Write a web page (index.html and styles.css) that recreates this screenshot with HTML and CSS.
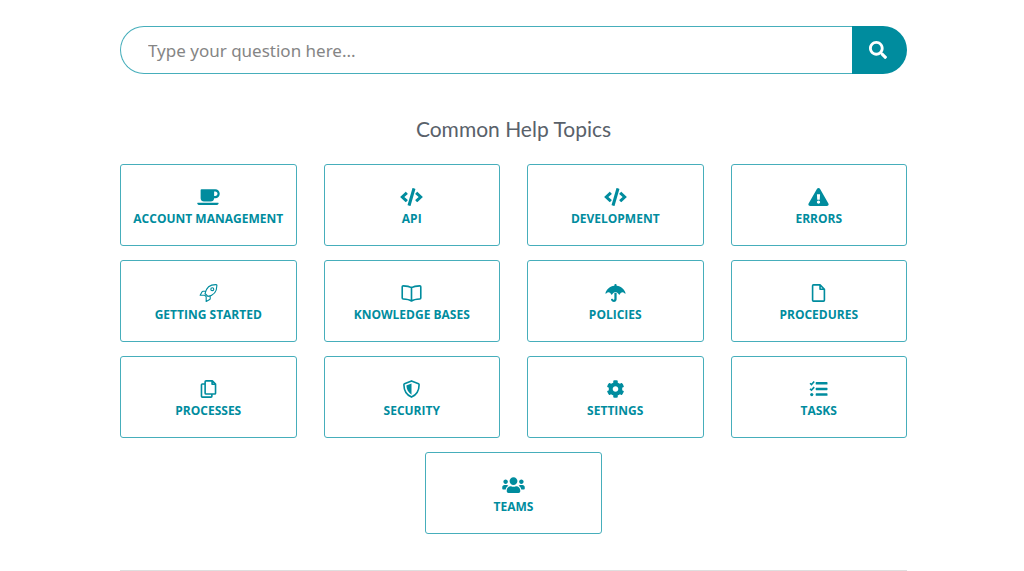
FILE: index.html
```
<!DOCTYPE html>
<html lang="en">
<head>
<meta charset="utf-8">
<title>Common Help Topics</title>
<link rel="stylesheet" href="styles.css">
</head>
<body>
<main class="page">
  <form class="search" role="search">
    <input class="search-input" type="text" aria-label="Search" placeholder="Type your question here...">
    <button class="search-button" type="button" aria-label="Submit search">
      <svg class="search-icon" viewBox="0 0 512 512"><path d="M505 442.700L405.300 343c-4.500-4.500-10.600-7-17-7H372c27.600-35.300 44-79.700 44-128C416 93.100 322.900 0 208 0S0 93.100 0 208s93.100 208 208 208c48.300 0 92.700-16.400 128-44v16.300c0 6.400 2.500 12.500 7 17l99.700 99.700c9.400 9.400 24.600 9.400 33.900 0l28.300-28.300c9.400-9.400 9.400-24.600.1-34zM208 336c-70.700 0-128-57.200-128-128 0-70.700 57.200-128 128-128 70.700 0 128 57.200 128 128 0 70.700-57.200 128-128 128z"/></svg>
    </button>
  </form>
  <h1 class="title">Common Help Topics</h1>
  <nav class="topics" aria-label="Help topics">
    <a class="topic" href="#"><svg class="icon" viewBox="0 0 640 512"><path d="M192 384h192c53 0 96-43 96-96h32c70.600 0 128-57.400 128-128S582.600 32 512 32H120c-13.300 0-24 10.700-24 24v232c0 53 43 96 96 96zM512 96c35.300 0 64 28.700 64 64s-28.700 64-64 64h-32V96h32zm47.700 384H48.300c-47.600 0-61-64-36-64h583.300c25 0 11.800 64-35.900 64z"/></svg>ACCOUNT MANAGEMENT</a>
    <a class="topic" href="#"><svg class="icon" viewBox="0 0 640 512"><path d="M278.900 511.500l-61-17.700c-6.400-1.800-10-8.500-8.200-14.900L346.200 8.700c1.800-6.400 8.500-10 14.900-8.200l61 17.700c6.400 1.800 10 8.500 8.200 14.900L293.800 503.300c-1.900 6.400-8.500 10.100-14.900 8.200zm-114-112.200l43.500-46.400c4.600-4.900 4.300-12.700-.8-17.200L117 256l90.600-79.700c5.100-4.500 5.500-12.300.8-17.200l-43.500-46.400c-4.500-4.800-12.100-5.100-17-.5L3.800 247.200c-5.100 4.700-5.100 12.800 0 17.500l144.100 135.100c4.900 4.600 12.500 4.400 17-.5zm327.200.6l144.100-135.100c5.100-4.700 5.100-12.800 0-17.500L492.100 112.100c-4.800-4.500-12.400-4.300-17 .5L431.600 159c-4.600 4.900-4.300 12.700.8 17.200L523 256l-90.600 79.700c-5.100 4.500-5.500 12.300-.8 17.200l43.500 46.400c4.500 4.900 12.100 5.100 17 .6z"/></svg>API</a>
    <a class="topic" href="#"><svg class="icon" viewBox="0 0 640 512"><path d="M278.900 511.500l-61-17.700c-6.400-1.800-10-8.500-8.200-14.900L346.200 8.700c1.800-6.400 8.500-10 14.900-8.200l61 17.700c6.400 1.800 10 8.500 8.200 14.900L293.800 503.300c-1.900 6.400-8.500 10.100-14.900 8.200zm-114-112.200l43.500-46.400c4.600-4.900 4.300-12.700-.8-17.200L117 256l90.600-79.700c5.100-4.500 5.500-12.300.8-17.200l-43.500-46.400c-4.500-4.800-12.100-5.100-17-.5L3.800 247.200c-5.100 4.700-5.100 12.800 0 17.500l144.100 135.100c4.900 4.600 12.500 4.400 17-.5zm327.200.6l144.100-135.100c5.100-4.700 5.100-12.800 0-17.500L492.100 112.100c-4.800-4.500-12.400-4.300-17 .5L431.600 159c-4.600 4.900-4.300 12.700.8 17.200L523 256l-90.600 79.700c-5.100 4.500-5.500 12.300-.8 17.200l43.500 46.400c4.500 4.900 12.100 5.100 17 .6z"/></svg>DEVELOPMENT</a>
    <a class="topic" href="#"><svg class="icon" viewBox="-32 0 640 512"><path d="M569.500 440C588 472 564.800 512 528 512H48C11 512-12 472 6.500 440L246.400 24c18.500-32 64.700-32 83.200 0zM288 354c-25.400 0-46 20.600-46 46s20.600 46 46 46 46-20.600 46-46-20.600-46-46-46zm-43.700-165.300l7.400 136c.4 6.300 5.600 11.300 12 11.300h48.600c6.300 0 11.600-5 12-11.300l7.400-136c.4-6.900-5.100-12.700-12-12.700h-63.400c-6.900 0-12.400 5.800-12 12.700z"/></svg>ERRORS</a>
    <a class="topic" href="#"><svg class="icon line thin" viewBox="-64 0 640 512"><path d="M158 270C190 110 300 12 478 18c10 0 14 6 14 14 8 176-92 288-252 320zM168 206H100c-12 0-20 4-26 14L18 320h130M304 344v74c0 12-4 20-14 26l-100 52V362M148 320l42 42M158 270l82 82"/><circle cx="364" cy="148" r="42"/></svg>GETTING STARTED</a>
    <a class="topic" href="#"><svg class="icon line" viewBox="-32 0 640 512"><path d="M288 102C220 62 130 54 54 52c-18 0-30 10-30 28v320c0 16 12 26 28 26 80 4 172 14 236 58 64-44 156-54 236-58 16 0 28-10 28-26V80c0-18-12-28-30-28-76 2-166 10-234 50zM288 102v382"/></svg>KNOWLEDGE BASES</a>
    <a class="topic" href="#"><svg class="icon" viewBox="-32 0 640 512"><path d="M320 48V28c0-38-64-38-64 0v20C128 60 32 146 1 260c-4 17 14 20 22 12 62-58 104-40 146 28 6 10 15 10 21 0 32-50 59-76 98-76s66 26 98 76c6 10 15 10 21 0 42-68 84-86 146-28 8 8 26 5 22-12C544 146 448 60 320 48zM256 258v168c0 24-30 30-42 6-12-28-66-8-52 24 14 36 48 56 82 56 42 0 76-34 76-80V258c-20-14-44-14-64 0z"/></svg>POLICIES</a>
    <a class="topic" href="#"><svg class="icon line" viewBox="-128 0 640 512"><path d="M236 24H48c-14 0-24 10-24 24v416c0 14 10 24 24 24h288c14 0 24-10 24-24V148zM236 24v124h124"/></svg>PROCEDURES</a>
    <a class="topic" href="#"><svg class="icon line" viewBox="-96 0 640 512"><path d="M320 400v62c0 16-10 26-26 26H50c-16 0-26-10-26-26V138c0-16 10-26 26-26h78M334 24H154c-16 0-26 10-26 26v324c0 16 10 26 26 26h244c16 0 26-10 26-26V114zM326 24v98h98"/></svg>PROCESSES</a>
    <a class="topic" href="#"><svg class="icon line" viewBox="-64 0 640 512"><path d="M256 26L56 108c-10 5-16 13-16 24 0 150 70 286 216 354 146-68 216-204 216-354 0-11-6-19-16-24z"/><path class="solid" d="M256 98v320C162 358 116 266 110 158z"/></svg>SECURITY</a>
    <a class="topic" href="#"><svg class="icon" viewBox="-64 0 640 512"><path d="M487.400 315.700l-42.600-24.600c4.300-23.200 4.300-47 0-70.200l42.600-24.600c4.900-2.800 7.100-8.600 5.500-14-11.100-35.600-30-67.800-54.700-94.600-3.800-4.100-10-5.100-14.800-2.300L380.800 110c-17.900-15.400-38.500-27.300-60.800-35.100V25.800c0-5.600-3.900-10.500-9.400-11.700-36.700-8.200-74.300-7.800-109.200 0-5.500 1.200-9.400 6.100-9.400 11.700V75c-22.200 7.900-42.800 19.800-60.800 35.100L88.700 85.500c-4.900-2.800-11-1.900-14.800 2.300-24.700 26.700-43.600 58.900-54.700 94.600-1.700 5.400.6 11.200 5.500 14L67.300 221c-4.300 23.200-4.300 47 0 70.200l-42.600 24.600c-4.900 2.800-7.100 8.600-5.500 14 11.100 35.600 30 67.800 54.700 94.600 3.800 4.100 10 5.100 14.800 2.300l42.600-24.600c17.900 15.400 38.500 27.300 60.800 35.100v49.200c0 5.600 3.900 10.500 9.400 11.700 36.700 8.200 74.300 7.800 109.200 0 5.500-1.200 9.400-6.100 9.400-11.700v-49.200c22.200-7.900 42.800-19.800 60.800-35.100l42.600 24.600c4.900 2.800 11 1.900 14.800-2.300 24.700-26.700 43.600-58.900 54.700-94.600 1.500-5.500-.7-11.300-5.600-14.100zM256 336c-44.100 0-80-35.900-80-80s35.900-80 80-80 80 35.900 80 80-35.900 80-80 80z"/></svg>SETTINGS</a>
    <a class="topic" href="#"><svg class="icon" viewBox="-64 0 640 512"><path d="M192 60h304c10 0 16 6 16 16v36c0 10-6 16-16 16H192c-10 0-16-6-16-16V76c0-10 6-16 16-16zM192 220h304c10 0 16 6 16 16v36c0 10-6 16-16 16H192c-10 0-16-6-16-16v-36c0-10 6-16 16-16zM192 380h304c10 0 16 6 16 16v36c0 10-6 16-16 16H192c-10 0-16-6-16-16v-36c0-10 6-16 16-16z"/><circle cx="64" cy="414" r="46"/><path class="check" d="M16 92l40 36 78-84M16 252l40 36 78-84"/></svg>TASKS</a>
    <a class="topic" href="#"><svg class="icon" viewBox="0 0 640 512"><path d="M96 224c35.300 0 64-28.700 64-64s-28.700-64-64-64-64 28.700-64 64 28.700 64 64 64zm448 0c35.300 0 64-28.700 64-64s-28.700-64-64-64-64 28.700-64 64 28.700 64 64 64zm32 32h-64c-17.600 0-33.500 7.100-45.100 18.600 40.300 22.100 68.900 62 75.100 109.400h66c17.700 0 32-14.300 32-32v-32c0-35.300-28.700-64-64-64zm-256 0c61.900 0 112-50.100 112-112S381.900 32 320 32 208 82.100 208 144s50.100 112 112 112zm76.800 32h-8.300c-20.800 10-43.900 16-68.500 16s-47.600-6-68.500-16h-8.300C179.600 288 128 339.600 128 403.200V432c0 26.500 21.500 48 48 48h288c26.500 0 48-21.500 48-48v-28.800c0-63.600-51.600-115.200-115.200-115.200zm-223.700-13.400C161.500 263.100 145.600 256 128 256H64c-35.300 0-64 28.700-64 64v32c0 17.700 14.300 32 32 32h65.900c6.300-47.400 34.900-87.300 75.200-109.400z"/></svg>TEAMS</a>
  </nav>
  <hr class="divider">
</main>
</body>
</html>
```
FILE: styles.css
```
* {
  box-sizing: border-box;
}

body {
  margin: 0;
  background: #fff;
  font-family: "Open Sans", "Noto Sans", sans-serif;
}

.page {
  padding: 26px 117px 0 120px;
}

.search {
  display: flex;
  height: 48px;
}

.search-input {
  flex: 1;
  min-width: 0;
  padding: 0 27px;
  border: 1px solid #46aebb;
  border-right: 0;
  border-radius: 24px 0 0 24px;
  background: #fff;
  color: #555;
  font-family: "Noto Sans", sans-serif;
  font-size: 17px;
}

.search-input::placeholder {
  color: #858585;
  opacity: 1;
}

.search-button {
  display: flex;
  align-items: center;
  justify-content: center;
  width: 55px;
  padding: 0 3px 0 0;
  border: 0;
  border-radius: 0 24px 24px 0;
  background: #008c9e;
}

.search-icon {
  width: 18px;
  height: 18px;
  fill: #fff;
}

.title {
  margin: 39px 0 19px;
  color: #59616a;
  font-family: Lato, sans-serif;
  font-size: 21px;
  font-weight: 400;
  line-height: 32px;
  text-align: center;
}

.topics {
  display: flex;
  flex-wrap: wrap;
  justify-content: center;
  gap: 14px 27px;
}

.topic {
  display: flex;
  flex-direction: column;
  align-items: center;
  flex: 0 0 calc((100% - 81px) / 4);
  gap: 5px;
  padding: 23px 0 18px;
  border: 1px solid #46aebb;
  border-radius: 3px;
  color: #008c9e;
  font-size: 12px;
  font-weight: 700;
  line-height: 16px;
  text-decoration: none;
  white-space: nowrap;
}

.icon {
  width: 23px;
  height: 18px;
  fill: currentColor;
}

.line {
  fill: none;
  stroke: currentColor;
  stroke-width: 46;
  stroke-linejoin: round;
  stroke-linecap: round;
}

.thin {
  stroke-width: 32;
}

.solid {
  fill: currentColor;
  stroke: none;
}

.check {
  fill: none;
  stroke: currentColor;
  stroke-width: 46;
}

.divider {
  height: 2px;
  margin: 36px 0 0;
  border: 0;
  background: #dedede;
}
```
